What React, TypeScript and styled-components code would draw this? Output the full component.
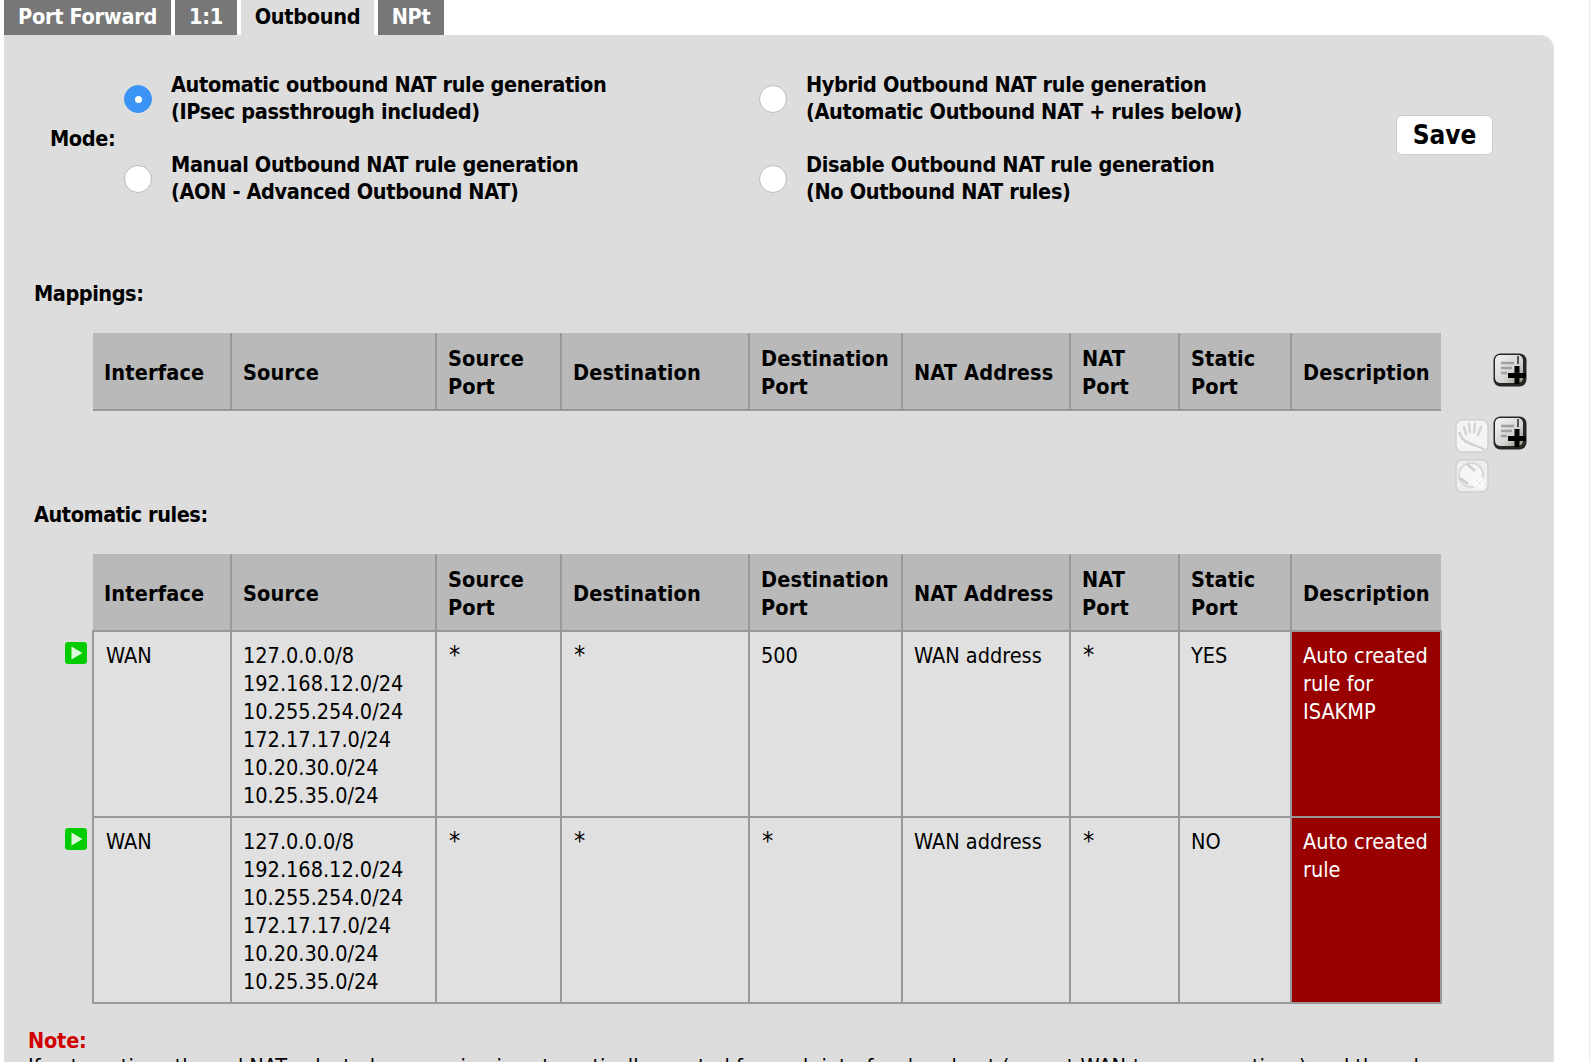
import React from 'react';
import styled, { createGlobalStyle } from 'styled-components';

const GlobalStyle = createGlobalStyle`
  html, body {
    margin: 0;
    height: 100%;
    overflow: hidden;
    background: #fff;
  }
  body {
    font-family: "DejaVu Sans Condensed", "DejaVu Sans", sans-serif;
    font-size: 21.5px;
    color: #000;
  }
`;

const Page = styled.div`
  height: 1062px;
  padding-left: 4px;
  border-right: 1px solid #f2e6e8;
  box-sizing: border-box;
  overflow: hidden;
`;
const Tabs = styled.div`
  display: flex;
  height: 35px;
`;
const Tab = styled.div<{ $active?: boolean; $width: number }>`
  width: ${p => p.$width}px;
  margin-right: 4px;
  box-sizing: border-box;
  padding-top: 1px;
  text-align: center;
  font-weight: bold;
  letter-spacing: -0.3px;
  line-height: 32px;
  background: ${p => (p.$active ? '#ddd' : '#777')};
  color: ${p => (p.$active ? '#000' : '#fff')};
`;
const Panel = styled.div`
  width: 1550px;
  height: 1027px;
  background: #ddd;
  border-top-right-radius: 14px;
  box-sizing: border-box;
  padding-top: 37px;
`;
const ModeBar = styled.div`
  display: flex;
  align-items: center;
  height: 132px;
  padding-left: 46px;
`;
const ModeLabel = styled.div`
  width: 74px;
  font-weight: bold;
  letter-spacing: -0.4px;
`;
const ModeGrid = styled.div`
  display: grid;
  grid-template-columns: 635px 637px;
  row-gap: 26px;
`;
const ModeOption = styled.label`
  display: flex;
  align-items: center;
  gap: 19px;
  font-weight: bold;
  letter-spacing: -0.35px;
  line-height: 27px;
`;
const Radio = styled.span<{ $checked?: boolean }>`
  flex: none;
  width: 28px;
  height: 28px;
  margin-top: 2px;
  border-radius: 50%;
  box-sizing: border-box;
  background: ${p => (p.$checked ? '#3b94f5' : '#fff')};
  border: 1px solid ${p => (p.$checked ? '#3b94f5' : '#bbb')};
  display: flex;
  align-items: center;
  justify-content: center;

  &::after {
    content: '';
    width: 7px;
    height: 7px;
    border-radius: 50%;
    background: ${p => (p.$checked ? '#fff' : 'transparent')};
  }
`;
const SaveButton = styled.button`
  width: 97px;
  height: 40px;
  margin-bottom: 6px;
  padding: 0;
  border: 1px solid #ccc;
  border-radius: 6px;
  background: #fff;
  color: #000;
  font: bold 26px "DejaVu Sans Condensed", "DejaVu Sans", sans-serif;
`;
const SectionTitle = styled.div`
  padding-left: 30px;
  font-weight: bold;
  letter-spacing: -0.45px;
  line-height: 28px;
`;
const MappingsTitle = styled(SectionTitle)`
  margin-top: 76px;
`;
const AutoTitle = styled(SectionTitle)`
  margin-top: 5px;
`;
const RuleTable = styled.table`
  table-layout: fixed;
  width: 1479px;
  margin: 25px 0 0 52px;
  border-collapse: collapse;
  line-height: 28px;
`;
const HeadCell = styled.th<{ $first?: boolean }>`
  height: 77px;
  padding: 3px 0 0 11px;
  box-sizing: border-box;
  background: #b9b9b9;
  border-left: ${p => (p.$first ? 'none' : '2px solid #999')};
  border-bottom: 2px solid #999;
  text-align: left;
  font-weight: bold;
  letter-spacing: 0.15px;
`;
const EdgeCell = styled.td`
  padding: 0;
  vertical-align: top;
`;
const Cell = styled.td<{ $danger?: boolean }>`
  height: 186px;
  padding: 10px 11px 0;
  box-sizing: border-box;
  vertical-align: top;
  border: 2px solid #999;
  background: ${p => (p.$danger ? '#990000' : '#e0e0e0')};
  color: ${p => (p.$danger ? '#fff' : '#000')};
`;
const InterfaceCell = styled(Cell)`
  padding-left: 12px;
`;
const Wildcard = styled.span`
  display: block;
  margin: -1px 0 0 1px;
  font-size: 25px;
  line-height: 28px;
`;
const SpacerRow = styled.td`
  height: 83px;
`;
const ActionStack = styled.div<{ $end?: boolean }>`
  display: flex;
  flex-wrap: wrap;
  align-items: flex-start;
  justify-content: ${p => (p.$end ? 'flex-end' : 'flex-start')};
  gap: 6px 4px;
  width: 72px;
  margin: ${p => (p.$end ? '20px' : '6px')} 0 0 14px;
`;
const StatusSlot = styled.div`
  padding: 11px 0 0 9px;
`;
const IconButton = styled.svg<{ $low?: boolean }>`
  display: block;
  width: 34px;
  height: 34px;
  margin-top: ${p => (p.$low ? '3px' : '0')};
`;
const PlayIcon = styled.svg`
  display: block;
  width: 22px;
  height: 22px;
`;
const NoteTitle = styled.div`
  margin: 23px 0 0 24px;
  font-weight: bold;
  letter-spacing: -0.2px;
  line-height: 28px;
  color: #d00000;
`;
const NoteText = styled.div`
  width: 1480px;
  margin: -2px 0 0 24px;
  line-height: 28px;
`;

const AddRuleIcon = () => (
  <IconButton viewBox="0 0 34 34">
    <defs>
      <linearGradient id="addFace" x1="0" y1="0" x2="1" y2="1">
        <stop offset="0" stopColor="#f4f4f4" />
        <stop offset="0.6" stopColor="#d4d4d4" />
        <stop offset="1" stopColor="#8f8f78" />
      </linearGradient>
    </defs>
    <rect x="0.5" y="0.5" width="33" height="33" rx="7" fill="#262626" />
    <rect x="2" y="2" width="28" height="28" rx="5" fill="url(#addFace)" />
    <path d="M8 10h13M8 15h11M8 20h6" stroke="#a0a0a0" strokeWidth="2.5" />
    <path d="M25 3v8" stroke="#555" strokeWidth="2" />
    <path d="M24 13v18M15 22.500h18" stroke="#000" strokeWidth="5" />
  </IconButton>
);

const HandIcon = () => (
  <IconButton viewBox="0 0 34 34" $low>
    <rect x="1" y="1" width="32" height="32" rx="6" fill="#f4f4f4" stroke="#cfcfcf" strokeWidth="1.5" />
    <path d="M4 13c3 8 7 10 12 12s10 3 14 6" fill="none" stroke="#d2d2d2" strokeWidth="2.5" />
    <path d="M9 8l2 7M14 5l1 8M20 5l-1 8M26 8l-3 8" stroke="#d4d4d4" strokeWidth="2.5" strokeLinecap="round" />
  </IconButton>
);

const DisabledDeleteIcon = () => (
  <IconButton viewBox="0 0 34 34">
    <rect x="1" y="1" width="32" height="32" rx="6" fill="#eeeeee" stroke="#cfcfcf" strokeWidth="1.5" />
    <circle cx="16" cy="16" r="12" fill="#f6f6f6" stroke="#d8d8d8" strokeWidth="2" />
    <path d="M12 5l8 7M5 19l8 6" stroke="#cccccc" strokeWidth="2.5" />
    <path d="M20 20l9 9M29 20l-9 9" stroke="#fff" strokeWidth="4.5" />
    <path d="M20 20l9 9M29 20l-9 9" stroke="#dadada" strokeWidth="1" />
  </IconButton>
);

const PassIcon = () => (
  <PlayIcon viewBox="0 0 22 22">
    <rect width="22" height="22" rx="3" fill="#00cc00" />
    <path d="M6.500 4.500l11 6.500-11 6.500z" fill="#d9f7d9" />
  </PlayIcon>
);

const COLUMN_WIDTHS = [37, 138, 205, 125, 188, 153, 168, 109, 112, 150, 94];

const Columns = () => (
  <colgroup>
    {COLUMN_WIDTHS.map((width, i) => (
      <col key={i} width={width} />
    ))}
  </colgroup>
);

const TableHead = ({ actions }: { actions?: React.ReactNode }) => (
  <tr>
    <EdgeCell />
    <HeadCell $first>Interface</HeadCell>
    <HeadCell>Source</HeadCell>
    <HeadCell>Source<br />Port</HeadCell>
    <HeadCell>Destination</HeadCell>
    <HeadCell>Destination<br />Port</HeadCell>
    <HeadCell>NAT Address</HeadCell>
    <HeadCell>NAT<br />Port</HeadCell>
    <HeadCell>Static<br />Port</HeadCell>
    <HeadCell>Description</HeadCell>
    <EdgeCell>{actions}</EdgeCell>
  </tr>
);

const SOURCES = ['127.0.0.0/8', '192.168.12.0/24', '10.255.254.0/24', '172.17.17.0/24', '10.20.30.0/24', '10.25.35.0/24'];

const RULES = [
  { destPort: '500', staticPort: 'YES', description: 'Auto created rule for ISAKMP' },
  { destPort: '*', staticPort: 'NO', description: 'Auto created rule' },
];

const App = () => (
  <Page>
    <GlobalStyle />
    <Tabs>
      <Tab $width={167}>Port Forward</Tab>
      <Tab $width={62}>1:1</Tab>
      <Tab $width={133} $active>Outbound</Tab>
      <Tab $width={66}>NPt</Tab>
    </Tabs>
    <Panel>
      <ModeBar>
        <ModeLabel>Mode:</ModeLabel>
        <ModeGrid>
          <ModeOption><Radio $checked />
            <span>Automatic outbound NAT rule generation<br />(IPsec passthrough included)</span>
          </ModeOption>
          <ModeOption><Radio />
            <span>Hybrid Outbound NAT rule generation<br />(Automatic Outbound NAT + rules below)</span>
          </ModeOption>
          <ModeOption><Radio />
            <span>Manual Outbound NAT rule generation<br />(AON - Advanced Outbound NAT)</span>
          </ModeOption>
          <ModeOption><Radio />
            <span>Disable Outbound NAT rule generation<br />(No Outbound NAT rules)</span>
          </ModeOption>
        </ModeGrid>
        <SaveButton>Save</SaveButton>
      </ModeBar>
      <MappingsTitle>Mappings:</MappingsTitle>
      <RuleTable>
        <Columns />
        <tbody>
          <TableHead actions={<ActionStack $end><AddRuleIcon /></ActionStack>} />
          <tr>
            <SpacerRow colSpan={10} />
            <EdgeCell>
              <ActionStack>
                <HandIcon />
                <AddRuleIcon />
                <DisabledDeleteIcon />
              </ActionStack>
            </EdgeCell>
          </tr>
        </tbody>
      </RuleTable>
      <AutoTitle>Automatic rules:</AutoTitle>
      <RuleTable>
        <Columns />
        <tbody>
          <TableHead />
          {RULES.map((rule, i) => (
            <tr key={i}>
              <EdgeCell><StatusSlot><PassIcon /></StatusSlot></EdgeCell>
              <InterfaceCell>WAN</InterfaceCell>
              <Cell>{SOURCES.map(source => <div key={source}>{source}</div>)}</Cell>
              <Cell><Wildcard>*</Wildcard></Cell>
              <Cell><Wildcard>*</Wildcard></Cell>
              <Cell>{rule.destPort === '*' ? <Wildcard>*</Wildcard> : rule.destPort}</Cell>
              <Cell>WAN address</Cell>
              <Cell><Wildcard>*</Wildcard></Cell>
              <Cell>{rule.staticPort}</Cell>
              <Cell $danger>{rule.description}</Cell>
              <EdgeCell />
            </tr>
          ))}
        </tbody>
      </RuleTable>
      <NoteTitle>Note:</NoteTitle>
      <NoteText>If automatic outbound NAT selected, a mapping is automatically created for each interface's subnet (except WAN-type connections) and the rules on "Mappings" section of this page are ignored.</NoteText>
    </Panel>
  </Page>
);

export default App;
